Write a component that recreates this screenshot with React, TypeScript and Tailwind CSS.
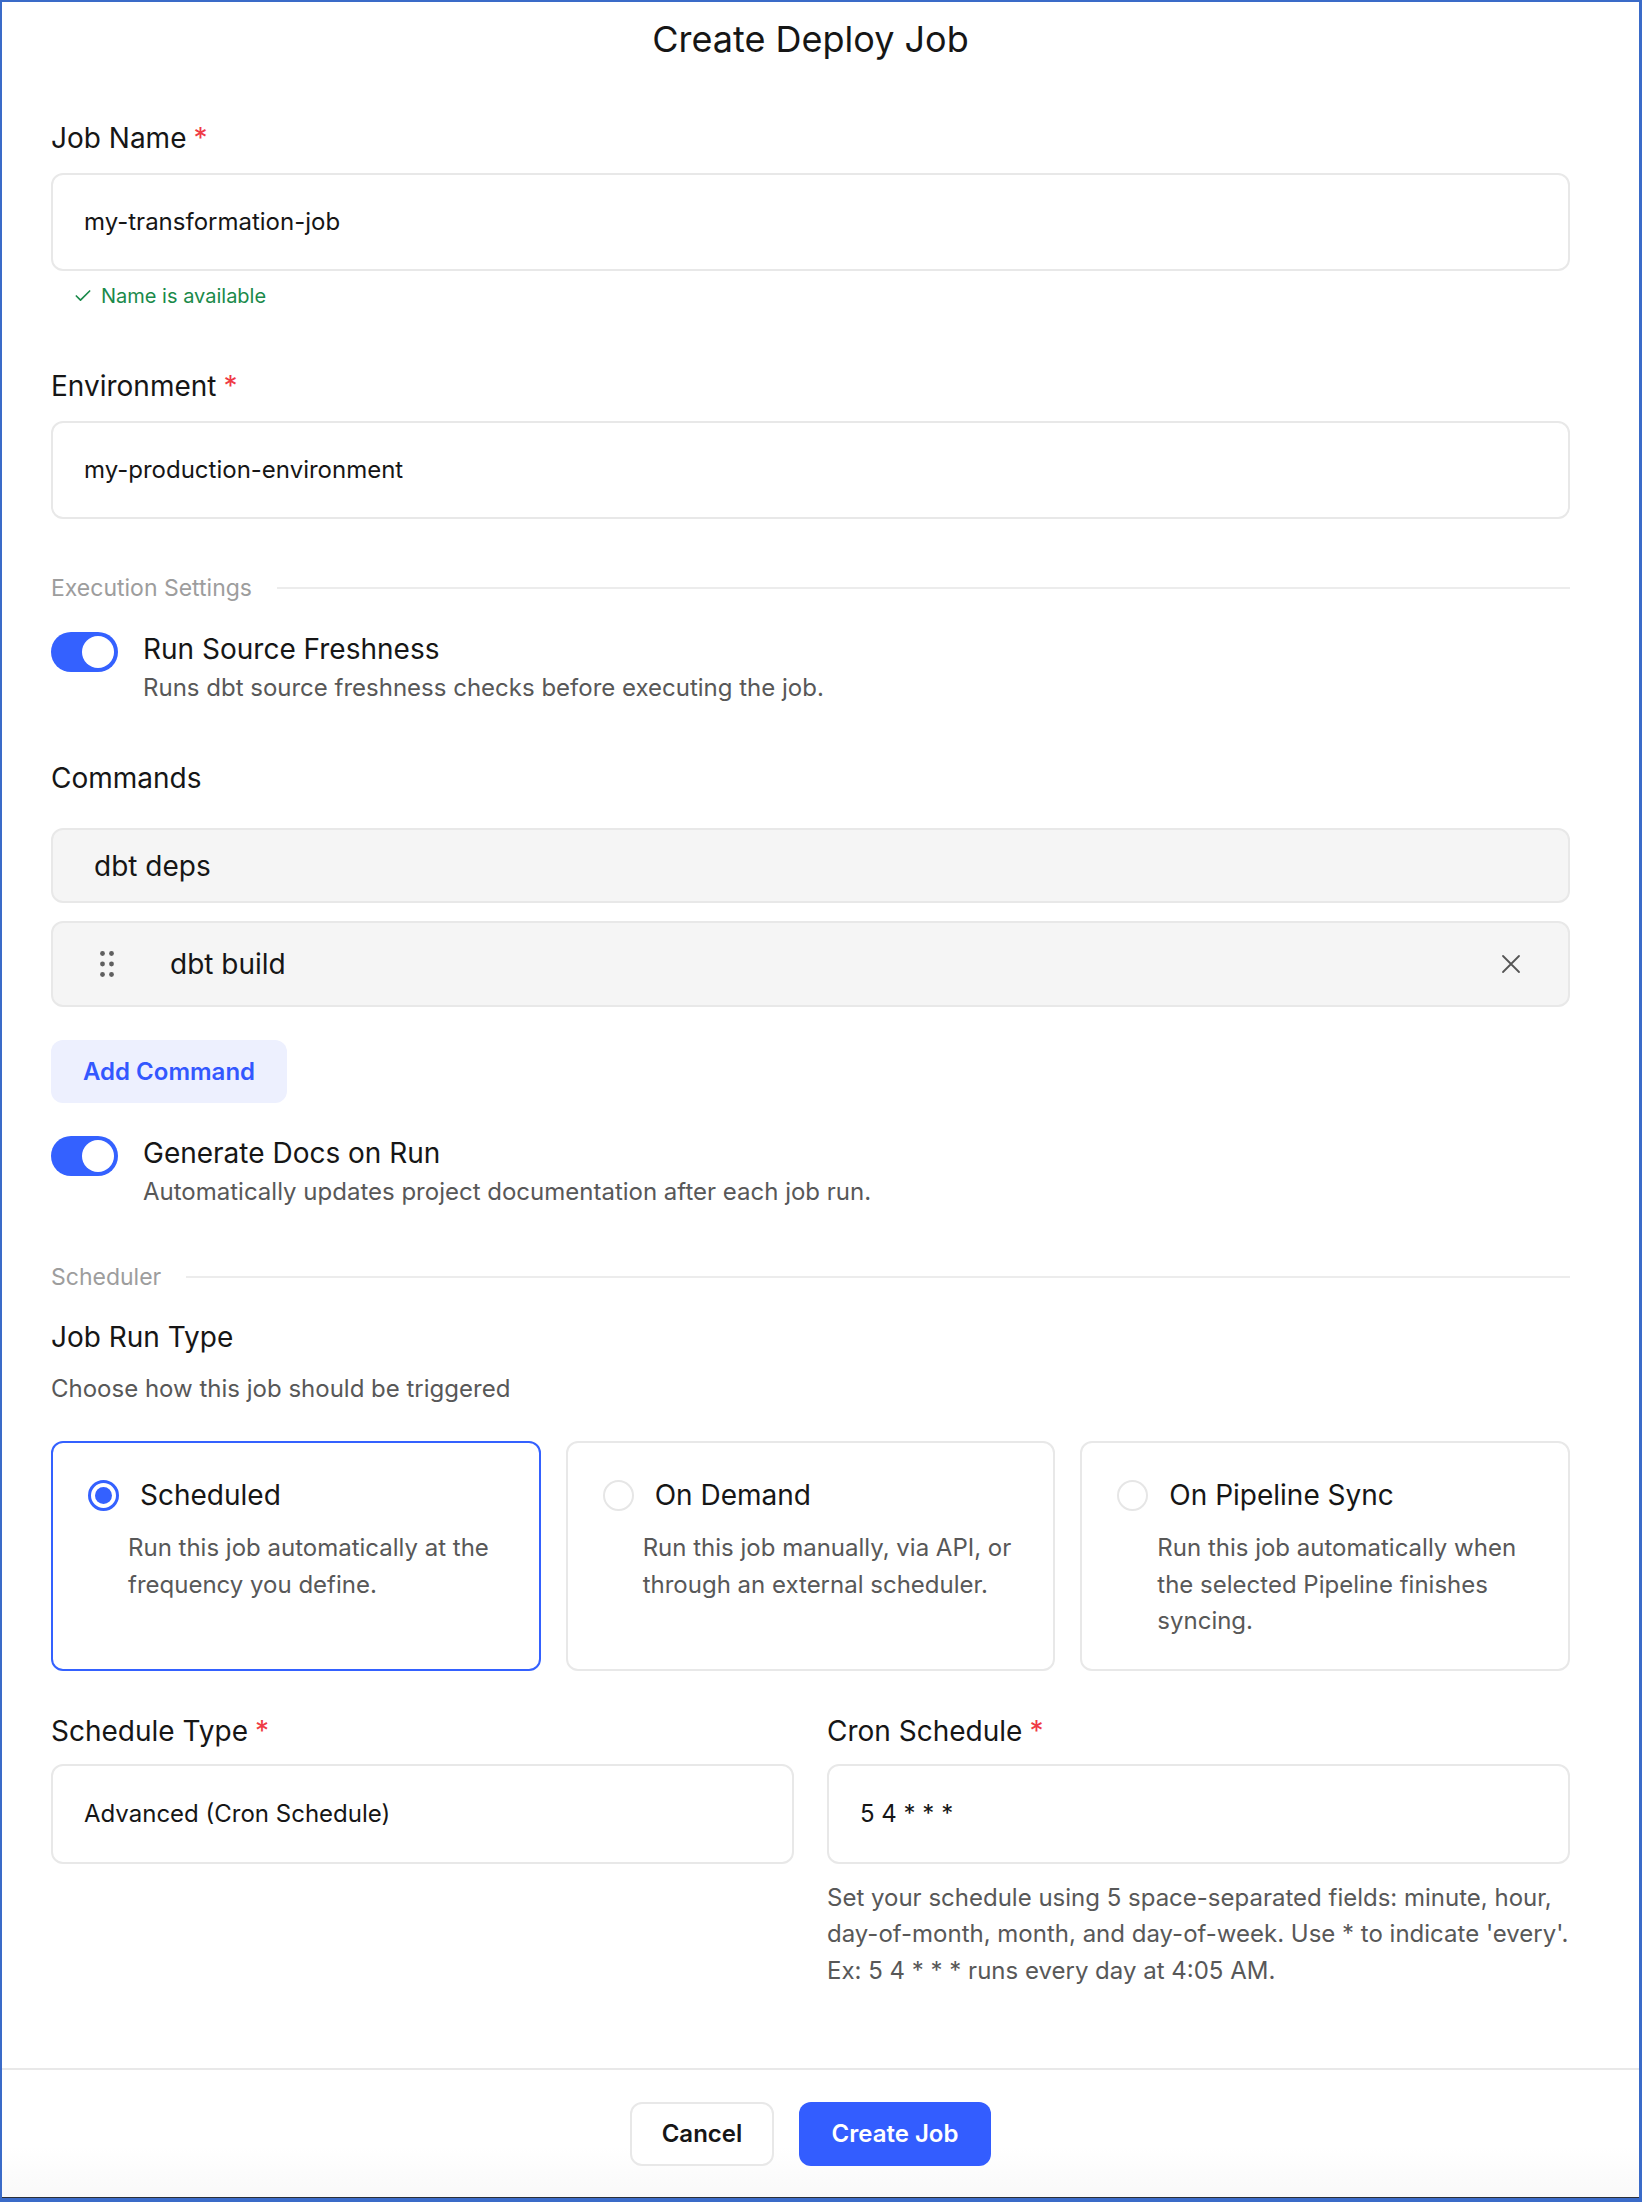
import React from "react";

function Required() {
  return <span className="ml-[7px] text-[#ef3b45]">*</span>;
}

function FieldLabel({ children, required }: { children: React.ReactNode; required?: boolean }) {
  return (
    <div className="text-[28px] leading-[36px] text-[#161616]">
      {children}
      {required && <Required />}
    </div>
  );
}

function TextBox({ value, className = "" }: { value: string; className?: string }) {
  return (
    <div
      className={`flex h-[98px] items-center rounded-[12px] border-2 border-[#e8e8e8] bg-white pl-[31px] text-[24px] text-[#161616] ${className}`}
    >
      {value}
    </div>
  );
}

function SectionDivider({ title, className = "" }: { title: string; className?: string }) {
  return (
    <div className={`flex items-center gap-[25px] ${className}`}>
      <span className="text-[23px] leading-[28px] text-[#9d9d9d]">{title}</span>
      <div className="h-[2px] flex-1 bg-[#ececec]" />
    </div>
  );
}

function ToggleRow({ title, desc, className = "" }: { title: string; desc: string; className?: string }) {
  return (
    <div className={`flex items-start gap-[25px] ${className}`}>
      <div className="mt-[1px] flex h-[40px] w-[67px] shrink-0 items-center justify-end rounded-full bg-[#3461ff] pr-[4px]">
        <div className="h-[32px] w-[32px] rounded-full bg-white" />
      </div>
      <div>
        <div className="text-[28px] leading-[36px] text-[#161616]">{title}</div>
        <div className="mt-[5px] text-[24px] leading-[32px] text-[#585858]">{desc}</div>
      </div>
    </div>
  );
}

function DragHandle() {
  return (
    <svg width="14" height="26" viewBox="0 0 14 26" className="shrink-0">
      {[0, 1, 2].map((r) =>
        [0, 1].map((c) => (
          <circle key={`${r}-${c}`} cx={2.5 + c * 9} cy={2.5 + r * 10.5} r="2.4" fill="#5f5f5f" />
        ))
      )}
    </svg>
  );
}

function RunTypeCard({
  title,
  desc,
  selected,
}: {
  title: string;
  desc: string;
  selected?: boolean;
}) {
  return (
    <div
      className={`rounded-[12px] border-2 bg-white pb-[29px] pl-[35px] pr-[30px] pt-[34px] ${
        selected ? "border-[#3461ff]" : "border-[#e8e8e8]"
      }`}
    >
      <div className="flex h-[36px] items-center gap-[21px]">
        {selected ? (
          <div className="flex h-[31px] w-[31px] shrink-0 items-center justify-center rounded-full border-[3px] border-[#3461ff]">
            <div className="h-[17px] w-[17px] rounded-full bg-[#3461ff]" />
          </div>
        ) : (
          <div className="h-[31px] w-[31px] shrink-0 rounded-full border-2 border-[#e6e6e6]" />
        )}
        <span className="text-[28px] leading-[36px] text-[#161616]">{title}</span>
      </div>
      <div className="ml-[40px] mt-[17px] text-[24px] leading-[36.5px] text-[#585858]">{desc}</div>
    </div>
  );
}

export default function App() {
  return (
    <div className="h-[2202px] w-[1642px] bg-[#3a6bc8] pb-[4px] pl-[2px] pr-[3px] pt-[2px] font-[Inter,sans-serif]">
      <div className="flex h-full flex-col border-b border-[#2b2f36] bg-white">
        <div className="flex-1 pl-[49px] pr-[69px] pt-[17px]">
          <h1 className="text-center text-[36px] leading-[40px] text-[#161616]">Create Deploy Job</h1>

          <div className="mt-[61px]">
            <FieldLabel required>Job Name</FieldLabel>
            <TextBox value="my-transformation-job" className="mt-[17px]" />
            <div className="mt-[11px] flex items-center gap-[8px] pl-[22px] text-[20px] leading-[28px] text-[#1a8a4a]">
              <svg width="20" height="20" viewBox="0 0 24 24" fill="none" stroke="currentColor" strokeWidth="2" strokeLinecap="round" strokeLinejoin="round">
                <path d="M20 6 9 17l-5-5" />
              </svg>
              Name is available
            </div>
          </div>

          <div className="mt-[58px]">
            <FieldLabel required>Environment</FieldLabel>
            <TextBox value="my-production-environment" className="mt-[17px]" />
          </div>

          <SectionDivider title="Execution Settings" className="mt-[55px]" />

          <ToggleRow
            className="mt-[29px]"
            title="Run Source Freshness"
            desc="Runs dbt source freshness checks before executing the job."
          />

          <div className="mt-[56px]">
            <FieldLabel>Commands</FieldLabel>
          </div>

          <div className="mt-[32px] flex h-[75px] items-center rounded-[12px] border-2 border-[#e8e8e8] bg-[#f5f5f5] pl-[41px] text-[28px] text-[#161616]">
            dbt deps
          </div>
          <div className="mt-[18px] flex h-[86px] items-center rounded-[12px] border-2 border-[#e8e8e8] bg-[#f5f5f5] pl-[47px] pr-[47px] text-[28px] text-[#161616]">
            <DragHandle />
            <span className="ml-[56px] flex-1">dbt build</span>
            <svg width="20" height="20" viewBox="0 0 20 20" stroke="#555" strokeWidth="1.8" strokeLinecap="round">
              <path d="M2 2l16 16M18 2 2 18" />
            </svg>
          </div>

          <button className="mt-[33px] h-[63px] rounded-[12px] bg-[#edf0fe] px-[32px] text-[24px] font-semibold text-[#3358ff]">
            Add Command
          </button>

          <ToggleRow
            className="mt-[32px]"
            title="Generate Docs on Run"
            desc="Automatically updates project documentation after each job run."
          />

          <SectionDivider title="Scheduler" className="mt-[55px]" />

          <div className="mt-[28px]">
            <FieldLabel>Job Run Type</FieldLabel>
          </div>
          <div className="mt-[18px] text-[24px] leading-[32px] text-[#585858]">
            Choose how this job should be triggered
          </div>

          <div className="mt-[36px] grid grid-cols-3 gap-[25px]">
            <RunTypeCard selected title="Scheduled" desc="Run this job automatically at the frequency you define." />
            <RunTypeCard title="On Demand" desc="Run this job manually, via API, or through an external scheduler." />
            <RunTypeCard
              title="On Pipeline Sync"
              desc="Run this job automatically when the selected Pipeline finishes syncing."
            />
          </div>

          <div className="mt-[42px] grid grid-cols-2 gap-[33px]">
            <div>
              <FieldLabel required>Schedule Type</FieldLabel>
              <TextBox value="Advanced (Cron Schedule)" className="mt-[15px] h-[100px]" />
            </div>
            <div>
              <FieldLabel required>Cron Schedule</FieldLabel>
              <TextBox value="5 4 * * *" className="mt-[15px] h-[100px]" />
              <p className="mt-[16px] text-[24px] leading-[36.5px] text-[#585858]">
                Set your schedule using 5 space-separated fields: minute, hour, day-of-month, month, and day-of-week. Use * to
                indicate 'every'. Ex: 5 4 * * * runs every day at 4:05 AM.
              </p>
            </div>
          </div>
        </div>

        <div className="border-t-2 border-[#e8e8e8] bg-gradient-to-b from-white from-60% to-[#f9f9f9] pb-[31px] pt-[32px]">
          <div className="mr-[20px] flex justify-center gap-[25px]">
            <button className="h-[64px] w-[144px] rounded-[12px] border-2 border-[#e8e8e8] bg-white text-[24px] font-semibold text-[#161616]">
              Cancel
            </button>
            <button className="h-[64px] w-[192px] rounded-[12px] bg-[#335dff] text-[24px] font-semibold text-white">
              Create Job
            </button>
          </div>
        </div>
      </div>
    </div>
  );
}
